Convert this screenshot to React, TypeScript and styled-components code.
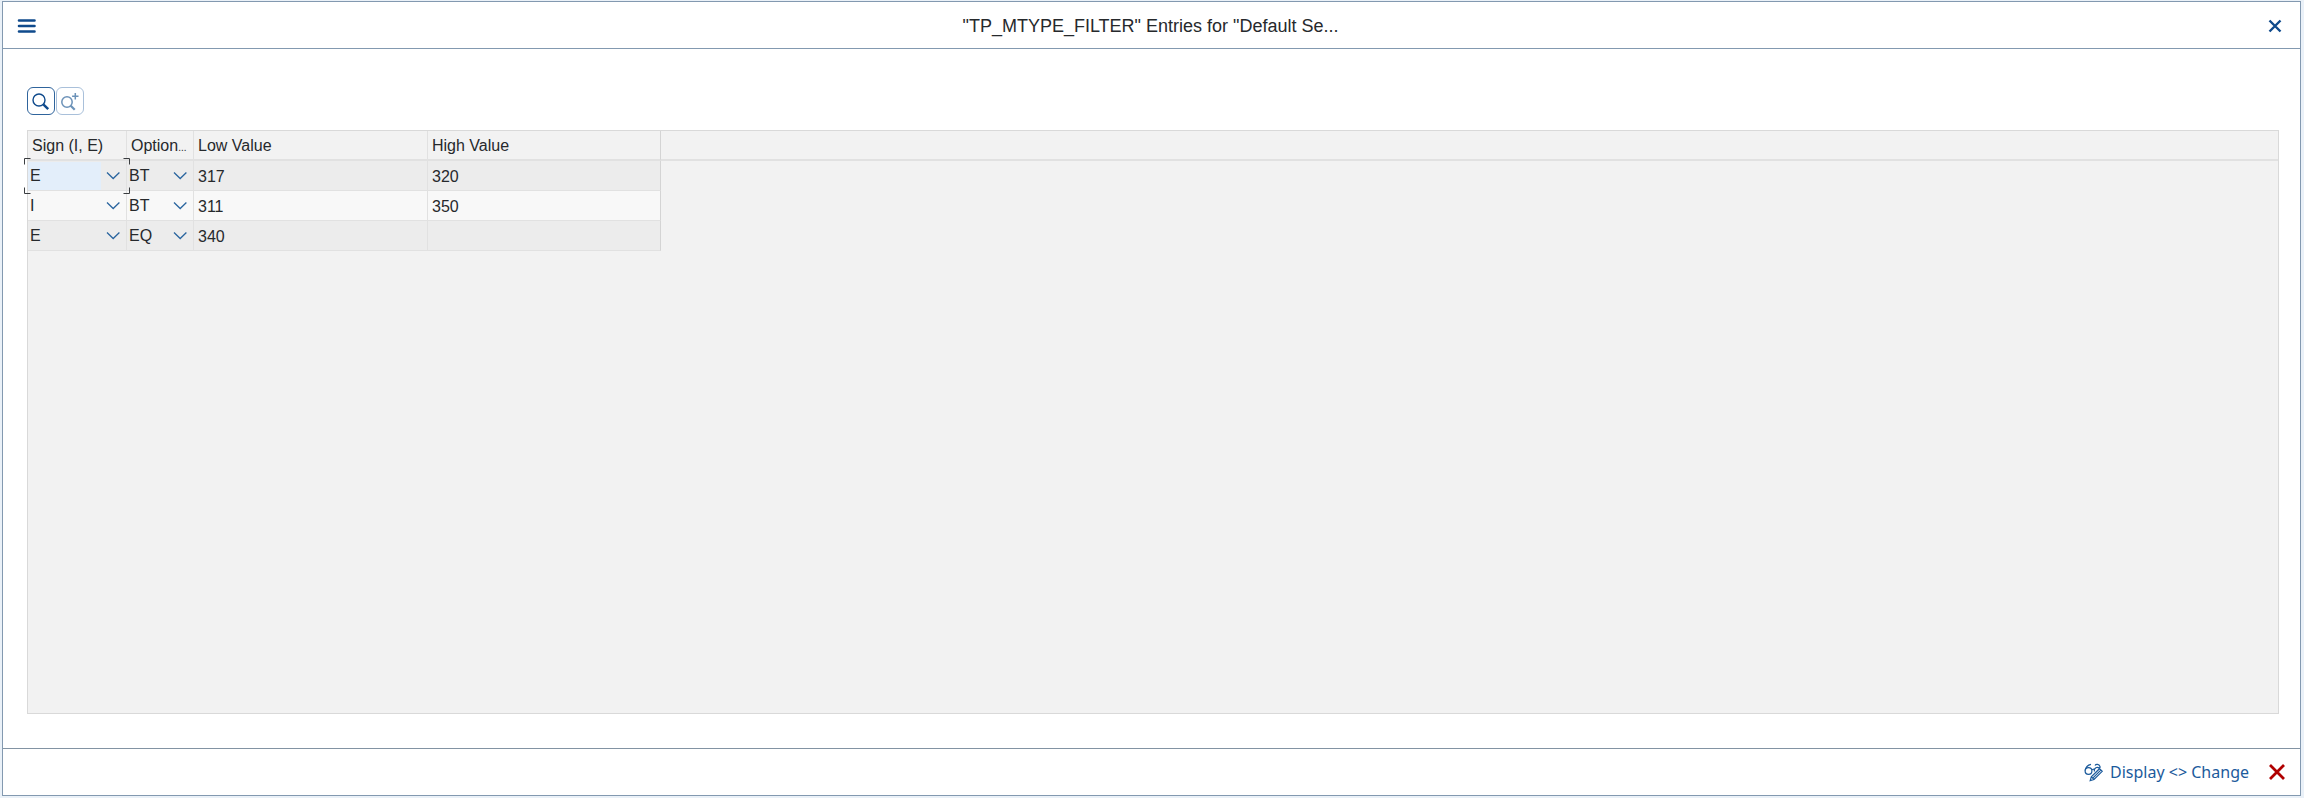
import React from "react";
import styled, { createGlobalStyle } from "styled-components";

const GlobalStyle = createGlobalStyle`
  *, *::before, *::after { box-sizing: border-box; }
  body {
    margin: 0;
    background: #eaf1f8;
    color: #26292c;
    font: 16px/20px "Liberation Sans", Arial, sans-serif;
  }
  button, select { font: inherit; color: inherit; }
`;

const Screen = styled.div`
  display: flex;
  min-height: 100vh;
  padding: 1px 3px 2px 2px;
`;

const Dialog = styled.section`
  flex: 1;
  display: flex;
  flex-direction: column;
  min-width: 0;
  background: #fff;
  border: 1px solid #8399b0;
`;

const Header = styled.header`
  display: grid;
  grid-template-columns: 48px 1fr 50px;
  align-items: center;
  height: 47px;
  padding-top: 2px;
  border-bottom: 1px solid #8399b0;
`;

const Title = styled.h1`
  margin: 0;
  text-align: center;
  font-size: 18px;
  font-weight: 400;
  line-height: 24px;
`;

const GhostButton = styled.button`
  display: flex;
  align-items: center;
  justify-content: center;
  padding: 0;
  height: 32px;
  border: 0;
  background: none;
  color: #0f4a8c;
`;

const Body = styled.main`
  flex: 1;
  display: flex;
  flex-direction: column;
  padding: 38px 21px 34px 24px;
`;

const Toolbar = styled.div`
  display: flex;
  gap: 1px;
  padding-bottom: 15px;
`;

const ToolButton = styled.button`
  display: flex;
  align-items: center;
  justify-content: center;
  width: 28px;
  height: 28px;
  padding: 0;
  border: 1px solid #2f649c;
  border-radius: 6px;
  background: #fff;
  color: #0f4a8c;

  &:disabled {
    border-color: #a9c0da;
    color: #6c92b8;
  }
`;

const GridArea = styled.div`
  flex: 1;
  border: 1px solid #d9d9d9;
  background: #f2f2f2;
`;

const Table = styled.table`
  width: 100%;
  table-layout: fixed;
  border-collapse: separate;
  border-spacing: 0;
`;

const HeadCell = styled.th<{ $last?: boolean }>`
  height: 30px;
  padding: 2px 0 0 4px;
  border-bottom: 2px solid #e1e1e1;
  border-right: 1px solid ${(p) => (p.$last ? "#d4d4d4" : "#e1e1e1")};
  text-align: left;
  font-weight: 400;
  white-space: nowrap;
  overflow: hidden;
`;

const Ellipsis = styled.span`
  font-size: 10px;
  line-height: 10px;
`;

const HeadFiller = styled.td`
  padding: 0;
  border-bottom: 2px solid #e1e1e1;
`;

const Row = styled.tr`
  background: #ececec;

  &:nth-child(even) { background: #f8f8f8; }
`;

const Cell = styled.td<{ $last?: boolean; $control?: boolean }>`
  height: 30px;
  padding: ${(p) => (p.$control ? "0" : "2px 0 0 4px")};
  border-bottom: 1px solid #e1e1e1;
  border-right: 1px solid ${(p) => (p.$last ? "#d4d4d4" : "#e1e1e1")};
`;

const BodyFiller = styled.td`
  padding: 0;
  background: #f2f2f2;
`;

const Picker = styled.div`
  position: relative;
  display: grid;
  grid-template-columns: 1fr 25px;
  align-items: center;
  height: 29px;
`;

const Select = styled.select<{ $active?: boolean }>`
  grid-area: 1 / 1 / 2 / 3;
  width: 100%;
  height: 28px;
  margin: 0;
  padding: 0 0 0 2px;
  border: 0;
  border-radius: 0;
  outline: 0;
  appearance: none;
  background: ${(p) =>
    p.$active ? "linear-gradient(to left, transparent 25px, #e3eefa 25px)" : "transparent"};
`;

const Chevron = styled.svg`
  grid-area: 1 / 2 / 2 / 3;
  pointer-events: none;
`;

const FocusFrame = styled.svg`
  position: absolute;
  left: -4px;
  top: -3px;
  width: 106px;
  height: 36px;
  pointer-events: none;
`;

const Footer = styled.footer`
  display: flex;
  align-items: center;
  justify-content: flex-end;
  gap: 14px;
  height: 47px;
  padding-right: 9px;
  border-top: 1px solid #8293a3;
`;

const ModeButton = styled(GhostButton)`
  gap: 6px;
  color: #1c5b9c;
  font-family: "Noto Sans", "Open Sans", sans-serif;
  font-size: 16px;
`;

const CancelButton = styled(GhostButton)`
  width: 28px;
  color: #b00000;
`;

type Entry = { sign: string; option: string; low: string; high: string };

const entries: Entry[] = [
  { sign: "E", option: "BT", low: "317", high: "320" },
  { sign: "I", option: "BT", low: "311", high: "350" },
  { sign: "E", option: "EQ", low: "340", high: "" },
];

function ValuePicker(props: { label: string; value: string; values: string[]; active?: boolean }) {
  return (
    <Picker>
      <Select aria-label={props.label} defaultValue={props.value} $active={props.active}>
        {props.values.map((v) => (
          <option key={v}>{v}</option>
        ))}
      </Select>
      <Chevron width="25" height="12" viewBox="0 0 25 12" fill="none" stroke="#2a659f" strokeWidth="1.3">
        <path d="M6 2.500L12.200 8.500L18.400 2.500" />
      </Chevron>
      {props.active && (
        <FocusFrame viewBox="0 0 106 36" fill="none" stroke="#3a3d40" aria-hidden="true">
          <path d="M.5 6.5V.5H6.5M99.5 .5H105.5V6.5M105.5 29.5V35.5H99.5M6.5 35.5H.5V29.5" />
        </FocusFrame>
      )}
    </Picker>
  );
}

export default function App() {
  return (
    <Screen>
      <GlobalStyle />
      <Dialog aria-label="Filter entries">
        <Header>
          <GhostButton aria-label="Menu">
            <svg width="20" height="16" viewBox="0 0 20 16" fill="none" stroke="currentColor" strokeWidth="2.6" strokeLinecap="round">
              <path d="M2 2.500H17.500M2 8H17.500M2 13.500H17.500" />
            </svg>
          </GhostButton>
          <Title>"TP_MTYPE_FILTER" Entries for "Default Se...</Title>
          <GhostButton aria-label="Close">
            <svg width="16" height="16" viewBox="0 0 16 16" fill="none" stroke="currentColor" strokeWidth="2.4">
              <path d="M2.500 2.500L13.500 13.500M13.500 2.500L2.500 13.500" />
            </svg>
          </GhostButton>
        </Header>
        <Body>
          <Toolbar>
            <ToolButton aria-label="Find">
              <svg width="20" height="20" viewBox="0 0 20 20" fill="none" stroke="currentColor">
                <circle cx="8" cy="9" r="6" strokeWidth="1.4" />
                <path d="M12.300 13.300L17.200 18.200" strokeWidth="2.400" />
              </svg>
            </ToolButton>
            <ToolButton aria-label="Find next" disabled>
              <svg width="20" height="20" viewBox="0 0 20 20" fill="none" stroke="currentColor">
                <circle cx="7" cy="11" r="5.200" strokeWidth="1.500" />
                <path d="M10.700 14.700L14.700 18.700" strokeWidth="2.200" />
                <path d="M15.300 2V8.400M12.100 5.200H18.500" strokeWidth="1.500" />
              </svg>
            </ToolButton>
          </Toolbar>
          <GridArea>
            <Table>
              <colgroup>
                <col style={{ width: 99 }} />
                <col style={{ width: 67 }} />
                <col style={{ width: 234 }} />
                <col style={{ width: 233 }} />
                <col />
              </colgroup>
              <thead>
                <tr>
                  <HeadCell>Sign (I, E)</HeadCell>
                  <HeadCell>
                    Option<Ellipsis>...</Ellipsis>
                  </HeadCell>
                  <HeadCell>Low Value</HeadCell>
                  <HeadCell $last>High Value</HeadCell>
                  <HeadFiller />
                </tr>
              </thead>
              <tbody>
                {entries.map((e, i) => (
                  <Row key={i}>
                    <Cell $control>
                      <ValuePicker label="Sign" value={e.sign} values={["I", "E"]} active={i === 0} />
                    </Cell>
                    <Cell $control>
                      <ValuePicker label="Option" value={e.option} values={["BT", "EQ"]} />
                    </Cell>
                    <Cell>{e.low}</Cell>
                    <Cell $last>{e.high}</Cell>
                    <BodyFiller />
                  </Row>
                ))}
              </tbody>
            </Table>
          </GridArea>
        </Body>
        <Footer>
          <ModeButton>
            <svg width="20" height="20" viewBox="0 0 20 20" fill="none" stroke="currentColor" strokeWidth="1.200">
              <circle cx="4.500" cy="9" r="3.400" />
              <path d="M1.200 8.500C1.600 5.500 3.600 3 7 2.300" />
              <path d="M7.800 8C8.600 7 9.600 7 10.400 7.800M10.400 9.500C9.600 5.500 13.500 4.500 15.500 6.500M11 3.500C12 1.800 15 2 16 4.500V6" />
              <path d="M6.200 18.600L7.300 14.800L15.500 6.700L18.200 9.300L10 17.500ZM7.500 14.800L10 17.500M8.800 16.200L16.800 8.100" />
            </svg>
            Display &lt;&gt; Change
          </ModeButton>
          <CancelButton aria-label="Cancel">
            <svg width="18" height="18" viewBox="0 0 18 18" fill="none" stroke="currentColor" strokeWidth="2.800">
              <path d="M2 2L16 16M16 2L2 16" />
            </svg>
          </CancelButton>
        </Footer>
      </Dialog>
    </Screen>
  );
}
